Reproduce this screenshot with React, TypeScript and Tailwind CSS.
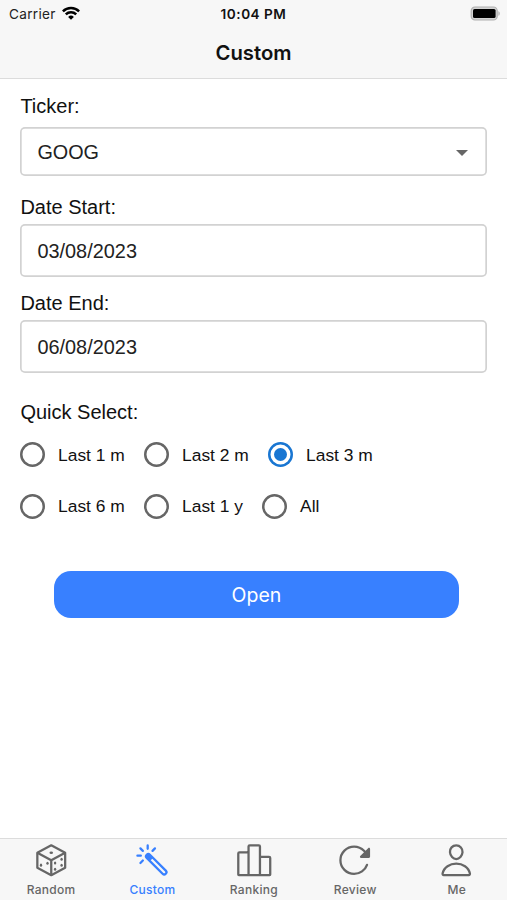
import type { ComponentType } from "react";
import {
  IoColorWandOutline,
  IoPersonOutline,
  IoPodiumOutline,
  IoReloadOutline,
} from "react-icons/io5";

const ranges = [
  [
    { label: "Last 1 m", width: "w-[124px]" },
    { label: "Last 2 m", width: "w-[124px]" },
    { label: "Last 3 m", width: "w-[124px]", checked: true },
  ],
  [
    { label: "Last 6 m", width: "w-[124px]" },
    { label: "Last 1 y", width: "w-[118px]" },
    { label: "All", width: "w-[80px]" },
  ],
];

function Dice({ className }: { className?: string }) {
  return (
    <svg viewBox="0 0 37 37" className={className} fill="none" stroke="currentColor" strokeWidth="2.3" strokeLinejoin="round">
      <path d="M18.5 3.4 32.6 10.9v15.2L18.5 33.6 4.4 26.1V10.9Z" />
      <path d="M4.4 10.9 18.5 18.6 32.6 10.9M18.5 18.6v15" />
      <g fill="currentColor" stroke="none">
        <ellipse cx="18.5" cy="10.9" rx="1.8" ry="1.2" />
        <ellipse cx="8.1" cy="23.5" rx="1.2" ry="1.6" />
        <ellipse cx="14.7" cy="21.5" rx="1.2" ry="1.6" />
        <ellipse cx="22.4" cy="21.3" rx="1.2" ry="1.6" />
        <ellipse cx="29" cy="17.5" rx="1.2" ry="1.6" />
        <ellipse cx="22.4" cy="27.6" rx="1.2" ry="1.6" />
        <ellipse cx="29" cy="23.6" rx="1.2" ry="1.6" />
      </g>
    </svg>
  );
}

const tabs: { label: string; Icon: ComponentType<{ className?: string }>; active?: boolean }[] = [
  { label: "Random", Icon: Dice },
  { label: "Custom", Icon: IoColorWandOutline, active: true },
  { label: "Ranking", Icon: IoPodiumOutline },
  { label: "Review", Icon: IoReloadOutline },
  { label: "Me", Icon: IoPersonOutline },
];

function Wifi() {
  return (
    <svg viewBox="0 0 18 14" className="mb-px ml-[6px] h-[14px] w-[18px]" fill="none" stroke="#000" strokeWidth="2.5">
      <path d="M0.9 5.3a11.6 11.6 0 0 1 16.2 0" />
      <path d="M3.8 8.4a7.4 7.4 0 0 1 10.4 0" />
      <path d="M9 13.7 6.1 10.9a4.1 4.1 0 0 1 5.8 0Z" fill="#000" stroke="none" />
    </svg>
  );
}

function Battery() {
  return (
    <svg viewBox="0 0 31 15" className="h-[15px] w-[31px]">
      <rect x="1.2" y="1" width="26" height="13" rx="3.8" fill="#d4d4d4" stroke="#b0b0b0" strokeWidth="1.2" />
      <rect x="3" y="2.9" width="22.6" height="9.2" rx="1.6" fill="#000" />
      <path d="M28.4 5.2c1.8.6 1.8 4 0 4.6Z" fill="#b0b0b0" />
    </svg>
  );
}

function DateField({ label, value }: { label: string; value: string }) {
  return (
    <div className="h-[96px]">
      <div className="h-[29px] text-[20px] leading-[24px]">{label}</div>
      <div className="flex h-[53px] items-center rounded-[5px] pl-[17px] text-[19.9px] leading-[30px] text-[#222] shadow-[inset_0_0_0_1.7px_#d2d2d2]">
        {value}
      </div>
    </div>
  );
}

function Radio({ label, checked, width }: { label: string; checked?: boolean; width: string }) {
  return (
    <div className={"flex items-center " + width}>
      <span
        className={
          "flex size-[25px] shrink-0 items-center justify-center rounded-full " +
          (checked ? "shadow-[inset_0_0_0_2.5px_#1976d2]" : "shadow-[inset_0_0_0_2.5px_#666]")
        }
      >
        {checked && <span className="size-[13px] rounded-full bg-[#1976d2]" />}
      </span>
      <span className="ml-[12.7px] text-[17.4px] leading-[24px] whitespace-nowrap">{label}</span>
    </div>
  );
}

export default function App() {
  return (
    <div className="flex h-[900px] w-[507px] flex-col overflow-hidden bg-white font-['Liberation_Sans',Arial,sans-serif] text-[#111]">
      <header className="h-[79px] shrink-0 border-b border-[#dcdcdc] bg-[#f7f7f7] font-[Inter,sans-serif]">
        <div className="grid h-[28px] grid-cols-3 items-center">
          <div className="flex items-center pl-[9px] text-[13.6px] tracking-[0.3px] text-[#222]">
            Carrier
            <Wifi />
          </div>
          <div className="text-center text-[13.6px] font-semibold tracking-[0.5px]">10:04 PM</div>
          <div className="flex justify-end pr-[6px] pb-px">
            <Battery />
          </div>
        </div>
        <h1 className="pt-[10px] text-center text-[20.3px] leading-[30px] font-semibold">Custom</h1>
      </header>

      <main className="flex-1 pt-[15px] pr-[19.6px] pl-[20.4px]">
        <div className="h-[33px] text-[20px] leading-[24px]">Ticker:</div>
        <div className="flex h-[49px] items-center justify-between rounded-[5px] pt-[2px] pr-[19px] pl-[17px] text-[19.8px] text-[#222] shadow-[inset_0_0_0_1.7px_#d2d2d2]">
          GOOG
          <svg viewBox="0 0 12 6" className="h-[6px] w-[12px]">
            <path d="M0 0h12L6 6Z" fill="#666" />
          </svg>
        </div>
        <div className="pt-[19px]">
          <DateField label="Date Start:" value="03/08/2023" />
          <DateField label="Date End:" value="06/08/2023" />
        </div>
        <div className="pt-[13px] text-[20px] leading-[24px]">Quick Select:</div>
        <div className="pt-[5px]">
          {ranges.map((row, i) => (
            <div key={i} className="flex h-[51.5px] items-center">
              {row.map((r) => (
                <Radio key={r.label} {...r} />
              ))}
            </div>
          ))}
        </div>
        <button className="mt-[39px] ml-[33.6px] block h-[47px] w-[405px] rounded-[17px] bg-[#3880ff] font-[Inter,sans-serif] text-[19.5px] text-white">
          <span className="relative top-px">Open</span>
        </button>
      </main>

      <nav className="grid h-[62px] shrink-0 grid-cols-5 border-t border-[#dcdcdc] bg-[#f7f7f7] font-[Inter,sans-serif]">
        {tabs.map(({ label, Icon, active }) => (
          <div
            key={label}
            className={"flex flex-col items-center pt-[3px] pl-[0.8px] " + (active ? "text-[#3880ff]" : "text-[#666]")}
          >
            <Icon className="size-[36.5px]" />
            <span className="mt-[4px] text-[12px] leading-[14px] font-medium tracking-[0.3px]">{label}</span>
          </div>
        ))}
      </nav>
    </div>
  );
}
